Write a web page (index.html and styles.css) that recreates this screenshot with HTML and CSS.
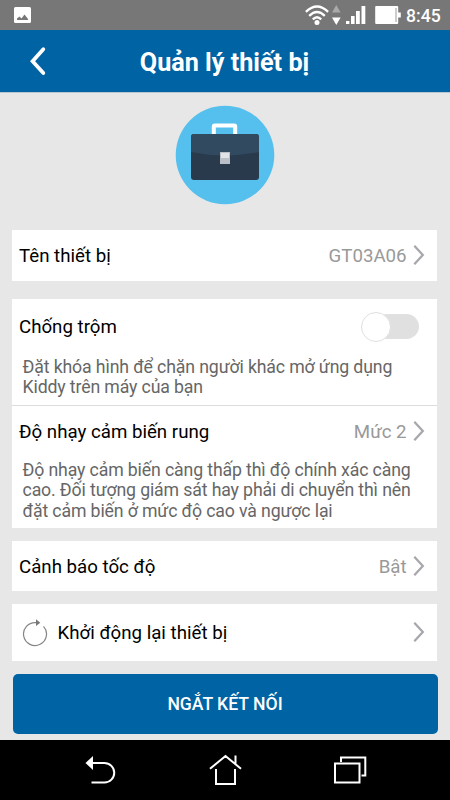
FILE: index.html
```html
<!DOCTYPE html>
<html lang="vi">
<head>
<meta charset="utf-8">
<meta name="viewport" content="width=device-width">
<title>Quản lý thiết bị</title>
<link rel="stylesheet" href="styles.css">
</head>
<body>
<div class="status">
  <svg class="status-photo" width="17" height="16" viewBox="0 0 17 16"><rect width="17" height="16" rx="1.5" fill="#fff"/><path d="M3 13V11.5L5.5 9.5L7.5 11.5L10.5 7.5L14 12V13Z" fill="#777"/></svg>
  <svg class="status-icons" width="98" height="22" viewBox="0 0 98 22">
    <g fill="none" stroke="#fff" stroke-width="2.3"><path d="M.9 7.9Q12 -3 23.1 7.9"/><path d="M4.2 11.9Q12 4.2 19.8 11.9"/><path d="M7.8 15.4Q12 11.2 16.2 15.4"/></g>
    <circle cx="12" cy="18.5" r="2.5" fill="#fff"/>
    <path d="M27 8.5L31.3 1L35.6 8.5Z" fill="#aaa"/><path d="M27 13.5H35.6L31.3 21Z" fill="#fff"/>
    <g fill="#fff"><rect x="41" y="17" width="3.4" height="3"/><rect x="46" y="12" width="3.6" height="8"/><rect x="51" y="7" width="3.8" height="13"/><rect x="56.5" y="2" width="3.8" height="18"/><rect x="70.2" y="2" width="23" height="18" rx="1"/><rect x="93" y="8.5" width="2.8" height="5"/></g>
    <rect x="90" y="4" width="2" height="14" fill="#ccc"/>
  </svg>
  <span class="clock">8:45</span>
</div>
<header class="header">
  <svg class="back" width="16" height="30" viewBox="0 0 16 30"><path d="M13.3 3.2L2.6 15.2L13.3 27" fill="none" stroke="#fff" stroke-width="3.8" stroke-linecap="round"/></svg>
  <h1>Quản lý thiết bị</h1>
</header>
<main class="main">
  <svg class="avatar" width="100" height="100" viewBox="0 0 100 100">
    <circle cx="50" cy="50" r="49.3" fill="#55bfed"/>
    <path d="M38.8 31V21.5Q38.8 20.5 39.8 20.5H59.2Q60.2 20.5 60.2 21.5V31" fill="none" stroke="#fff" stroke-width="4"/>
    <rect x="16" y="29" width="68" height="46" rx="3" fill="#2a3a4d"/>
    <path d="M16 47V32Q16 29 19 29H81Q84 29 84 32V47Q50 54 16 47Z" fill="#324a60"/>
    <rect x="45" y="47" width="10" height="12" fill="#b9bec7"/><rect x="46" y="48" width="8" height="5" fill="#e0e3e8"/>
  </svg>
  <section class="card name-card">
    <div class="row"><span>Tên thiết bị</span><span class="value">GT03A06</span><svg class="chev" width="12" height="22" viewBox="0 0 12 22"><path d="M1.3 1.8L9.8 11L1.3 20.2"/></svg></div>
  </section>
  <section class="card sensor-card">
    <div class="row theft"><span>Chống trộm</span><span class="switch"><i class="knob"></i></span></div>
    <p class="desc">Đặt khóa hình để chặn người khác mở ứng dụng<br>Kiddy trên máy của bạn</p>
    <div class="row vibration"><span>Độ nhạy cảm biến rung</span><span class="value">Mức 2</span><svg class="chev" width="12" height="22" viewBox="0 0 12 22"><path d="M1.3 1.8L9.8 11L1.3 20.2"/></svg></div>
    <p class="desc">Độ nhạy cảm biến càng thấp thì độ chính xác càng<br>cao. Đối tượng giám sát hay phải di chuyển thì nên<br>đặt cảm biến ở mức độ cao và ngược lại</p>
  </section>
  <section class="card speed-card">
    <div class="row"><span>Cảnh báo tốc độ</span><span class="value">Bật</span><svg class="chev" width="12" height="22" viewBox="0 0 12 22"><path d="M1.3 1.8L9.8 11L1.3 20.2"/></svg></div>
  </section>
  <section class="card restart-card">
    <div class="row restart"><svg class="reload" width="26" height="28" viewBox="0 0 26 28"><path d="M21.5 7.3A11.5 11.5 0 1 1 14 3.6" fill="none" stroke="#858585" stroke-width="1.2"/><path d="M14 .3L18.3 3.7L14 7Z" fill="#777"/></svg><span>Khởi động lại thiết bị</span><svg class="chev" width="12" height="22" viewBox="0 0 12 22"><path d="M1.3 1.8L9.8 11L1.3 20.2"/></svg></div>
  </section>
  <button class="disconnect">NGẮT KẾT NỐI</button>
</main>
<nav class="nav">
  <svg width="450" height="60" viewBox="0 0 450 60" fill="none" stroke="#fff" stroke-width="2">
    <path d="M92 23H104.5A9.75 9.75 0 0 1 104.5 42.5H91.5"/><path d="M85.5 23L93 16V30Z" fill="#fff" stroke="none"/>
    <path d="M210 28.8L225.5 16L241 28.8M216 29V44H235V29M235.5 15.5V24"/>
    <path d="M335 23.5H359.5V42.5H335ZM341 22V17.5H365.3V35.5H361.5"/>
  </svg>
</nav>
</body>
</html>
```

FILE: styles.css
```css
* { box-sizing: border-box; }
body { margin: 0; width: 450px; height: 800px; display: flex; flex-direction: column; overflow: hidden; background: #e7e7e7; font-family: Roboto, "Noto Sans", sans-serif; }
svg { display: block; flex: none; }
.status { height: 30px; flex: none; display: flex; align-items: flex-start; background: #777; color: #fff; padding-left: 14px; }
.status-photo { margin-top: 7px; }
.status-icons { margin: 4px 0 0 274px; }
.clock { margin-left: 3px; font-size: 17.6px; line-height: 32px; font-weight: 500; white-space: nowrap; }
.header { height: 63px; flex: none; display: flex; align-items: center; background: #0063a4; border-bottom: 1px solid #b9c7d2; color: #fff; padding: 0 29px 0 30px; }
.header h1 { flex: 1; margin: 3px 18px 0 0; text-align: center; font-size: 25.2px; line-height: 30px; font-weight: 700; }
.main { flex: 1; display: flex; flex-direction: column; padding: 12px 12.5px 6px; }
.avatar { align-self: center; margin-bottom: 25px; }
.card { background: #fff; flex: none; margin-right: .4px; margin-left: -.4px; }
.name-card { height: 51px; margin-bottom: 18px; }
.sensor-card { height: 229px; margin-bottom: 13px; }
.speed-card { height: 50px; margin-bottom: 13px; }
.restart-card { height: 57px; margin-bottom: 13px; }
.row { display: flex; align-items: center; height: 51px; padding: 0 12px 0 6.9px; font-size: 18.7px; color: #000; white-space: nowrap; }
.value { margin-left: auto; color: #999; }
.chev { margin: -2px 0 0 6.5px; fill: none; stroke: #aaa6ad; stroke-width: 2.3; }
.theft { height: 56px; padding-right: 17px; }
.vibration { height: 53px; border-top: 1px solid #ddd; }
.desc { margin: 0; padding: 1.6px 0 0 10.4px; font-size: 17.7px; letter-spacing: -.13px; line-height: 20.6px; color: #666; white-space: nowrap; }
.theft + .desc { height: 50px; }
.switch { position: relative; width: 44px; height: 25px; margin: -1px 1px 0 auto; border-radius: 13px; background: #e0e0e0; }
.knob { position: absolute; left: -14px; top: -2.5px; width: 30px; height: 30px; border-radius: 50%; border: 1px solid #e0e0e0; background: #fff; }
.restart { height: 57px; padding-left: 9.5px; }
.reload { margin-right: 9.9px; }
.restart .chev { margin-left: auto; }
.disconnect { height: 60px; flex: none; border: 0; border-radius: 5px; background: #0063a4; color: #fff; font-family: inherit; font-size: 17.6px; font-weight: 500; margin: 0; }
.nav { height: 60px; flex: none; background: #000; }
```
